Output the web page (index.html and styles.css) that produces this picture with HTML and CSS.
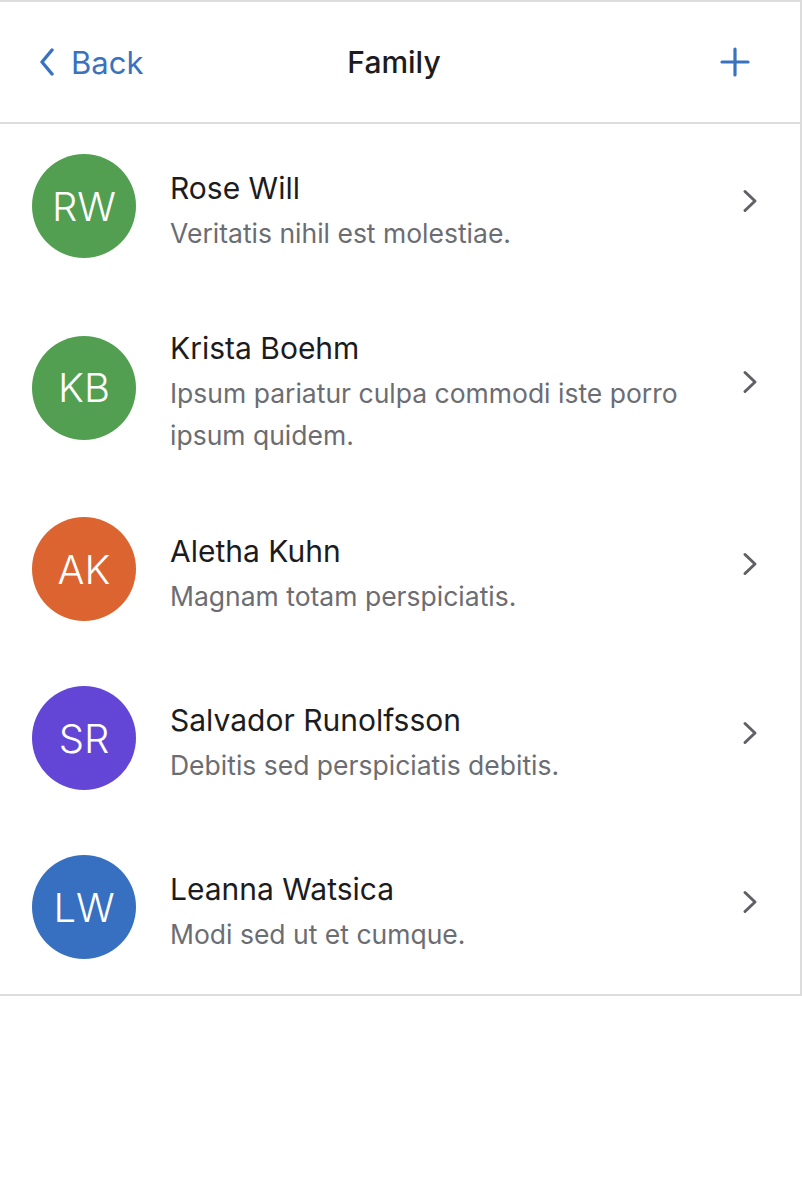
FILE: index.html
```html
<!DOCTYPE html>
<html lang="en">
<head>
<meta charset="utf-8">
<title>Family</title>
<link rel="stylesheet" href="styles.css">
</head>
<body>
<div class="screen">
  <header class="nav">
    <a class="nav-back" href="#">
      <svg class="nav-back-icon" width="18" height="28" viewBox="0 0 18 28"><path d="M14 2 L4 14 L14 26" fill="none" stroke="currentColor" stroke-width="3.4" stroke-linecap="round" stroke-linejoin="round"/></svg>
      <span>Back</span>
    </a>
    <h1 class="nav-title">Family</h1>
    <div class="nav-action">
      <svg width="30" height="30" viewBox="0 0 30 30"><path d="M15 2 V28 M2 15 H28" fill="none" stroke="currentColor" stroke-width="3.2" stroke-linecap="round"/></svg>
    </div>
  </header>
  <ul class="list">
    <li class="row">
      <div class="avatar avatar-green">RW</div>
      <div class="row-text">
        <div class="row-name">Rose Will</div>
        <div class="row-sub">Veritatis nihil est molestiae.</div>
      </div>
      <svg class="chev" width="16" height="24" viewBox="0 0 16 24"><path d="M3 2.5 L13 12 L3 21.5" fill="none" stroke="currentColor" stroke-width="3" stroke-linecap="round" stroke-linejoin="round"/></svg>
    </li>
    <li class="row">
      <div class="avatar avatar-green">KB</div>
      <div class="row-text">
        <div class="row-name">Krista Boehm</div>
        <div class="row-sub">Ipsum pariatur culpa commodi iste porro ipsum quidem.</div>
      </div>
      <svg class="chev" width="16" height="24" viewBox="0 0 16 24"><path d="M3 2.5 L13 12 L3 21.5" fill="none" stroke="currentColor" stroke-width="3" stroke-linecap="round" stroke-linejoin="round"/></svg>
    </li>
    <li class="row">
      <div class="avatar avatar-orange">AK</div>
      <div class="row-text">
        <div class="row-name">Aletha Kuhn</div>
        <div class="row-sub">Magnam totam perspiciatis.</div>
      </div>
      <svg class="chev" width="16" height="24" viewBox="0 0 16 24"><path d="M3 2.5 L13 12 L3 21.5" fill="none" stroke="currentColor" stroke-width="3" stroke-linecap="round" stroke-linejoin="round"/></svg>
    </li>
    <li class="row">
      <div class="avatar avatar-purple">SR</div>
      <div class="row-text">
        <div class="row-name">Salvador Runolfsson</div>
        <div class="row-sub">Debitis sed perspiciatis debitis.</div>
      </div>
      <svg class="chev" width="16" height="24" viewBox="0 0 16 24"><path d="M3 2.5 L13 12 L3 21.5" fill="none" stroke="currentColor" stroke-width="3" stroke-linecap="round" stroke-linejoin="round"/></svg>
    </li>
    <li class="row">
      <div class="avatar avatar-blue">LW</div>
      <div class="row-text">
        <div class="row-name">Leanna Watsica</div>
        <div class="row-sub">Modi sed ut et cumque.</div>
      </div>
      <svg class="chev" width="16" height="24" viewBox="0 0 16 24"><path d="M3 2.5 L13 12 L3 21.5" fill="none" stroke="currentColor" stroke-width="3" stroke-linecap="round" stroke-linejoin="round"/></svg>
    </li>
  </ul>
</div>
</body>
</html>
```

FILE: styles.css
```css
* { box-sizing: border-box; }
html, body {
  margin: 0;
  padding: 0;
  background: #ffffff;
}
body {
  font-family: Inter, "Noto Sans", "Liberation Sans", sans-serif;
  color: #1c1c1e;
}
.screen {
  width: 802px;
  border-top: 2px solid #dcdcdc;
  border-right: 2px solid #dcdcdc;
  border-bottom: 2px solid #dcdcdc;
  background: #fff;
}
.nav {
  height: 122px;
  display: grid;
  grid-template-columns: 1fr auto 1fr;
  align-items: center;
  padding: 0 50px 0 38px;
  border-bottom: 2px solid #dcdcdc;
}
.nav-back {
  display: flex;
  align-items: center;
  gap: 15px;
  color: #3a72c0;
  text-decoration: none;
  font-size: 31px;
  justify-self: start;
}
.nav-back-icon { display: block; }
.nav-title {
  margin: 0;
  font-size: 30px;
  font-weight: 500;
  color: #1c1c1e;
}
.nav-action {
  justify-self: end;
  color: #3a72c0;
  display: flex;
}
.list {
  list-style: none;
  margin: 0;
  padding: 0;
}
.row {
  display: flex;
  align-items: center;
  padding: 0 42px 0 32px;
}
.avatar {
  flex: 0 0 104px;
  width: 104px;
  height: 104px;
  margin: 30px 0 35px;
  border-radius: 50%;
  color: #fff;
  font-size: 40px;
  font-weight: 300;
  display: flex;
  align-items: center;
  justify-content: center;
}
.avatar-green { background: #539f51; }
.avatar-orange { background: #db6430; }
.avatar-purple { background: #6346d5; }
.avatar-blue { background: #3770c0; }
.row-text {
  flex: 1;
  margin-left: 34px;
  padding: 27px 43px 31px 0;
}
.row-name {
  font-size: 30px;
  font-weight: 400;
  line-height: 56px;
  color: #1c1c1e;
}
.row-sub {
  font-size: 26.5px;
  line-height: 42px;
  margin-top: -4px;
  color: #6b6d72;
}
.chev {
  color: #5f6166;
  flex: 0 0 auto;
  margin-bottom: 16px;
}
```
